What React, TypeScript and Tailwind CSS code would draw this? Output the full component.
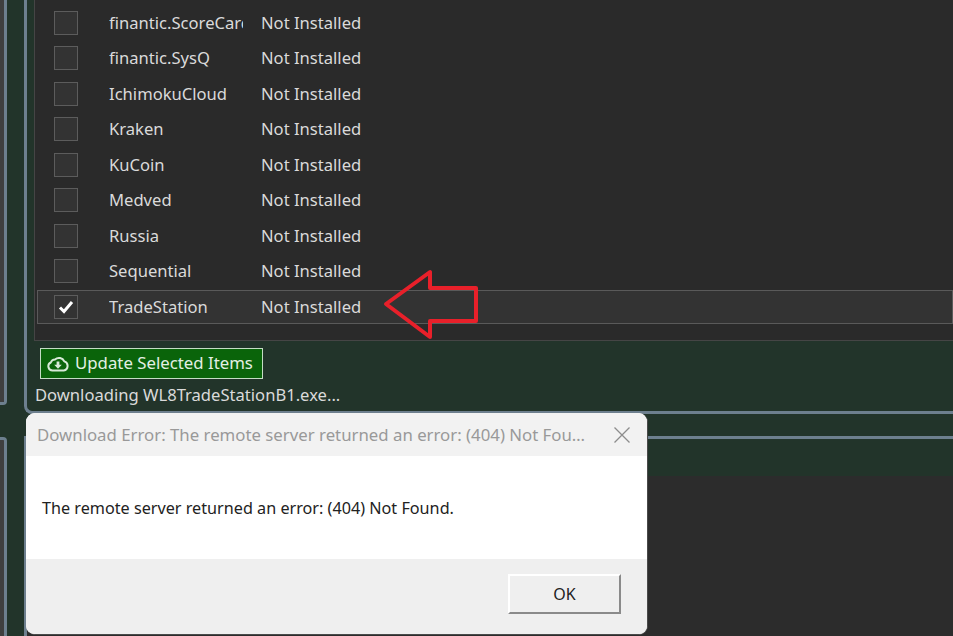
const rows = [
  "finantic.ScoreCard",
  "finantic.SysQ",
  "IchimokuCloud",
  "Kraken",
  "KuCoin",
  "Medved",
  "Russia",
  "Sequential",
  "TradeStation",
];

const Row = ({ name, selected }: { name: string; selected: boolean }) => (
  <div className="h-[35.5px] flex items-center">
    <div
      className={`h-[34px] w-full flex items-center border ${
        selected ? "bg-[#333333] border-[#5a5a5a]" : "border-transparent"
      }`}
    >
      <div className="ml-[16px] w-[24px] h-[24px] shrink-0 bg-[#333333] border border-[#5c5c5c] flex items-center justify-center">
        {selected && (
          <svg width="16" height="14" viewBox="0 0 16 14">
            <path d="M2 7.5L6 11.5L14 2" fill="none" stroke="white" strokeWidth="3" />
          </svg>
        )}
      </div>
      <div className="ml-[31px] pt-[1px] w-[134px] shrink-0 overflow-hidden whitespace-nowrap">{name}</div>
      <div className="ml-[18px] pt-[1px] whitespace-nowrap">Not Installed</div>
    </div>
  </div>
);

const CloudIcon = () => (
  <svg width="22" height="17" viewBox="0 0 22 17" className="shrink-0">
    <path
      d="M5.5 15.5A4.2 4.2 0 0 1 3.8 7.5A4.4 4.4 0 0 1 8 4.4A5.9 5.9 0 0 1 17.3 6.4A4.7 4.7 0 0 1 16.8 15.5Z"
      fill="none"
      stroke="#d8ead8"
      strokeWidth="2"
      strokeLinejoin="round"
    />
    <path d="M9.6 6.5H12.4V9.8H14.8L11 13.8L7.2 9.8H9.6Z" fill="#d8ead8" />
  </svg>
);

export default function App() {
  return (
    <div className="relative w-[953px] h-[636px] overflow-hidden flex bg-[#22342a] font-['Noto_Sans',sans-serif] text-[16.6px] text-[#dadada]">
      {/* left column, mostly off the page */}
      <div className="w-[7px] shrink-0 flex flex-col">
        <div className="h-[405px] bg-[#3f3f3f] border-r-[3px] border-b-[3px] border-[#6d7f8e] rounded-br-[4px]" />
        <div className="flex-1 mt-[32px] bg-[#3f3f3f] border-r-[3px] border-t-[3px] border-[#6d7f8e] rounded-tr-[4px]" />
      </div>

      <div className="ml-[17px] flex-1 flex flex-col min-w-0">
        {/* extensions panel */}
        <div className="h-[414px] shrink-0 border-l-[3px] border-b-[3px] border-[#6d7f8e] rounded-bl-[8px] flex flex-col">
          <div className="ml-[7px] h-[341px] shrink-0 pt-[4.75px] pl-[2px] bg-[#2a2a2a] border-l border-b border-[#454545] overflow-hidden">
            {rows.map((r) => (
              <Row key={r} name={r} selected={r === "TradeStation"} />
            ))}
          </div>
          <div className="ml-[13px] mt-[7px] w-[223px] h-[31px] flex items-center gap-[5px] pl-[6px] bg-[#0a640a] border border-[#c4dcc4] text-[#e4efe4] whitespace-nowrap">
            <CloudIcon />
            <span className="ml-[1px] pb-[1px] text-[16.8px]">Update Selected Items</span>
          </div>
          <div className="ml-[8px] mt-[1px] leading-[30px] whitespace-nowrap">Downloading WL8TradeStationB1.exe...</div>
        </div>

        {/* log panel */}
        <div className="mt-[22px] flex-1 flex flex-col border-l-[3px] border-t-[3px] border-[#6d7f8e]">
          <div className="h-[37px] shrink-0" />
          <div className="flex-1 bg-[#2c2c2c]" />
        </div>
      </div>

      {/* red annotation arrow */}
      <svg className="absolute left-[378px] top-[264px]" width="104" height="80" viewBox="0 0 104 80">
        <path
          d="M8 40L52 8V24H98V57H52V73Z"
          fill="none"
          stroke="#e8202a"
          strokeWidth="4"
          strokeLinejoin="round"
        />
      </svg>

      {/* error dialog */}
      <div className="absolute left-[26px] top-[413px] w-[622px] h-[222px] flex flex-col rounded-[9px] overflow-hidden border-r border-b border-[#4a4a4a] bg-white">
        <div className="h-[43px] shrink-0 bg-[#f2f2f2] flex items-center pl-[11px] pr-[17px] text-[16.8px] text-[#999999]">
          <div className="w-[552px] shrink-0 truncate">Download Error: The remote server returned an error: (404) Not Found.</div>
          <svg className="ml-auto" width="16" height="16" viewBox="0 0 16 16">
            <path d="M0.5 0.5L15.5 15.5M15.5 0.5L0.5 15.5" stroke="#8c8c8c" strokeWidth="1.3" />
          </svg>
        </div>
        <div className="flex-1 flex items-center pl-[16px] pt-[2px] text-[16.2px] text-[#222222]">
          The remote server returned an error: (404) Not Found.
        </div>
        <div className="h-[75px] shrink-0 bg-[#efefef] flex items-start justify-end pt-[15px] pr-[26px]">
          <div className="w-[113px] h-[40px] flex items-center justify-center bg-[#efefef] border-t-2 border-l-2 border-r-2 border-b-2 border-t-white border-l-white border-r-[#8a8a8a] border-b-[#8a8a8a] text-[16px] text-[#222222]">
            OK
          </div>
        </div>
      </div>
    </div>
  );
}
